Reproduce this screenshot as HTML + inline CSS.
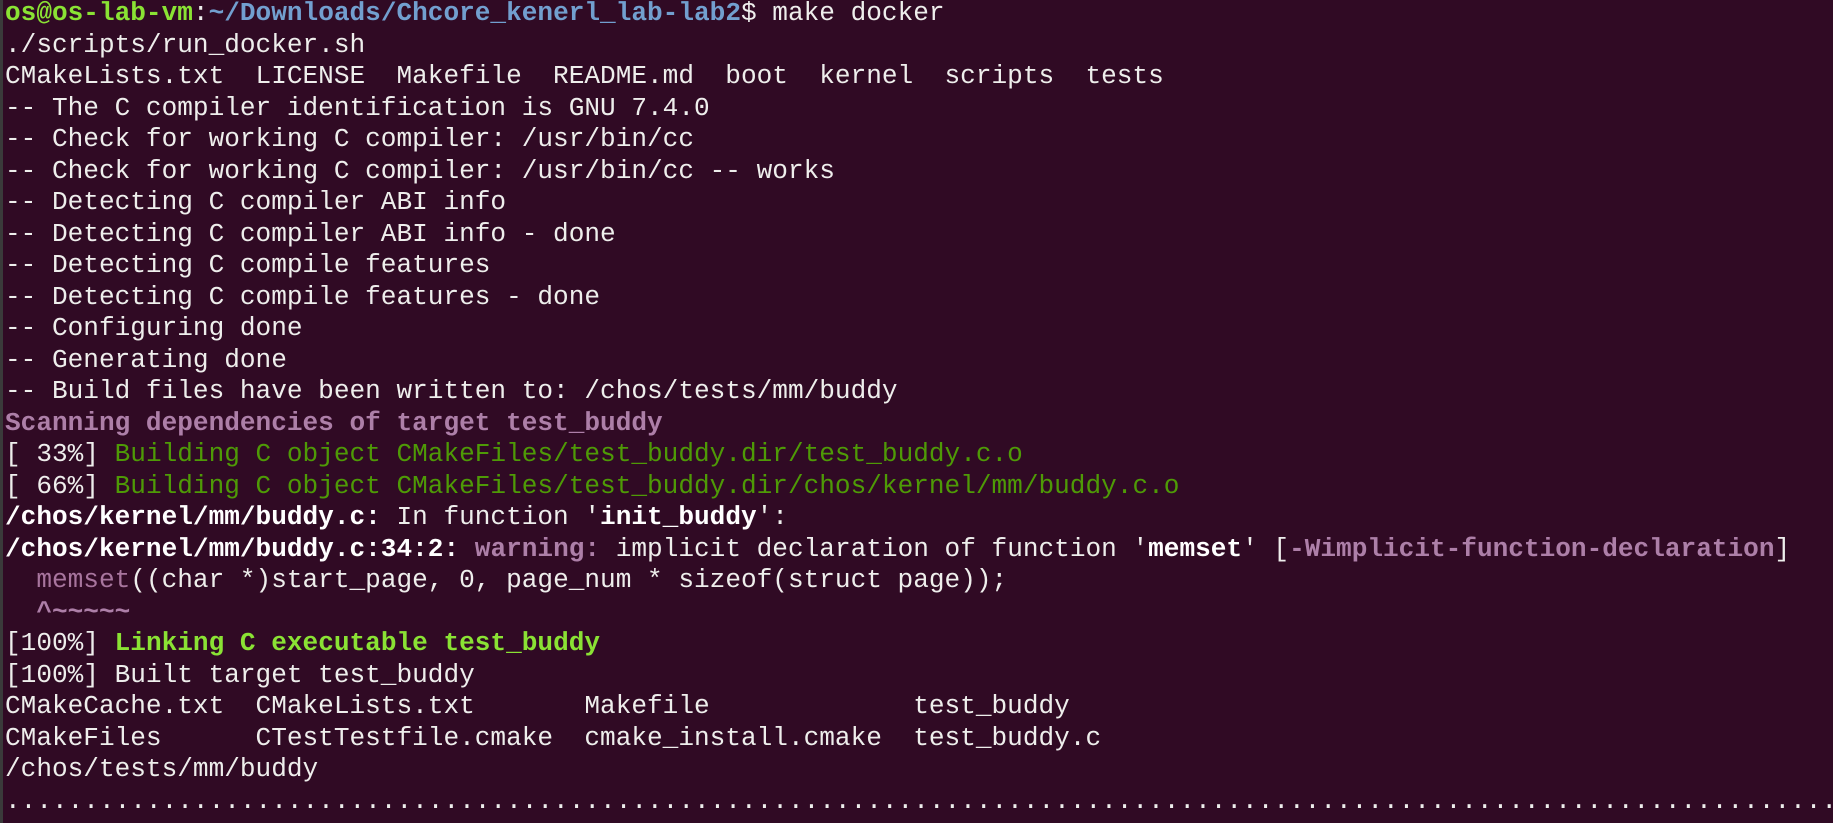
<!DOCTYPE html>
<html><head><meta charset="utf-8"><style>
html,body{margin:0;padding:0;}
body{width:1833px;height:823px;background:#300a24;overflow:hidden;position:relative;}
.bar{position:absolute;left:0;top:0;width:3px;height:823px;background:#3a3a3a;}
pre{margin:0;position:absolute;left:5px;top:-2px;font-family:"Liberation Mono",monospace;font-size:26.1px;line-height:31.5px;color:#eeeeec;white-space:pre;}
.g{color:#8ae234;font-weight:bold}
.b{color:#729fcf;font-weight:bold}
.m{color:#ad7fa8;font-weight:bold}
.dg{color:#4e9a06}
.mm{color:#a8759e}
.w{color:#fff;font-weight:bold}
</style></head><body><div class="bar"></div><pre><span class="g">os@os-lab-vm</span>:<span class="b">~/Downloads/Chcore_kenerl_lab-lab2</span>$ make docker
./scripts/run_docker.sh
CMakeLists.txt  LICENSE  Makefile  README.md  boot  kernel  scripts  tests
-- The C compiler identification is GNU 7.4.0
-- Check for working C compiler: /usr/bin/cc
-- Check for working C compiler: /usr/bin/cc -- works
-- Detecting C compiler ABI info
-- Detecting C compiler ABI info - done
-- Detecting C compile features
-- Detecting C compile features - done
-- Configuring done
-- Generating done
-- Build files have been written to: /chos/tests/mm/buddy
<span class="m">Scanning dependencies of target test_buddy</span>
[ 33%] <span class="dg">Building C object CMakeFiles/test_buddy.dir/test_buddy.c.o</span>
[ 66%] <span class="dg">Building C object CMakeFiles/test_buddy.dir/chos/kernel/mm/buddy.c.o</span>
<span class="w">/chos/kernel/mm/buddy.c:</span> In function '<span class="w">init_buddy</span>':
<span class="w">/chos/kernel/mm/buddy.c:34:2:</span> <span class="m">warning: </span>implicit declaration of function '<span class="w">memset</span>' [<span class="m">-Wimplicit-function-declaration</span>]
  <span class="mm">memset</span>((char *)start_page, 0, page_num * sizeof(struct page));
  <span class="m">^~~~~~</span>
[100%] <span class="g">Linking C executable test_buddy</span>
[100%] Built target test_buddy
CMakeCache.txt  CMakeLists.txt       Makefile             test_buddy
CMakeFiles      CTestTestfile.cmake  cmake_install.cmake  test_buddy.c
/chos/tests/mm/buddy
.....................................................................................................................</pre></body></html>
